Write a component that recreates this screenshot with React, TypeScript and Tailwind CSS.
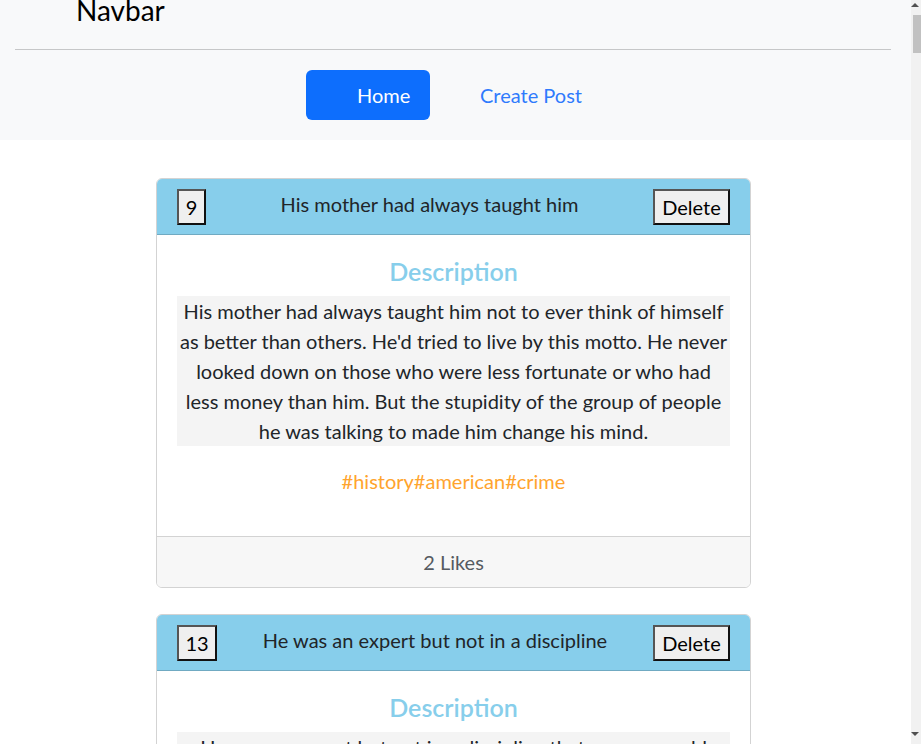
type Post = {
  id: number;
  title: string;
  lines: string[];
  tags: string[];
  likes: number;
};

const posts: Post[] = [
  {
    id: 9,
    title: "His mother had always taught him",
    lines: [
      "His mother had always taught him not to ever think of himself",
      "as better than others. He'd tried to live by this motto. He never",
      "looked down on those who were less fortunate or who had",
      "less money than him. But the stupidity of the group of people",
      "he was talking to made him change his mind.",
    ],
    tags: ["history", "american", "crime"],
    likes: 2,
  },
  {
    id: 13,
    title: "He was an expert but not in a discipline",
    lines: [
      "He was an expert but not in a discipline that anyone could",
      "fully appreciate. He knew how to hold the cone just right so",
      "that the soft serve ice cream fell into it at the precise angle",
      "to form a perfect cone each and every time.",
    ],
    tags: ["fiction", "english"],
    likes: 1,
  },
];

function OldButton({ children, width }: { children: React.ReactNode; width: string }) {
  return (
    <button
      className={`${width} h-[36px] shrink-0 flex items-center justify-center bg-[#efefef] text-[20px] text-black border-2 border-t-[#555] border-l-[#555] border-b-[#111] border-r-[#111]`}
    >
      {children}
    </button>
  );
}

function PostCard({ post }: { post: Post }) {
  return (
    <div className="w-[595px] bg-white border border-[#d3d3d3] rounded-md overflow-hidden">
      <div className="h-[56px] bg-[#87ceeb] border-b border-[#70aac2] flex items-center px-[20px]">
        <OldButton width={post.id > 9 ? "w-[40px]" : "w-[29px]"}>{post.id}</OldButton>
        <div className="flex-1 text-center text-[20px] leading-[30px] text-[#212529] -mt-[5px]">{post.title}</div>
        <OldButton width="w-[77px]">Delete</OldButton>
      </div>
      <div className="px-[20px] pt-[22px] pb-[40px]">
        <h4 className="text-center text-[25px] leading-[29px] font-semibold text-[#87ceeb] mb-[10px]">Description</h4>
        <p className="bg-[#f4f4f4] text-center text-[20px] leading-[30px] text-[#212529]">
          {post.lines.map((l, i) => (
            <span key={i}>
              {l}
              {i < post.lines.length - 1 && <br />}
            </span>
          ))}
        </p>
        <p className="mt-[20px] text-center text-[20px] leading-[30px] text-[#ffa42e]">
          {post.tags.map((t) => `#${t}`).join("")}
        </p>
      </div>
      <div className="h-[51px] bg-[#f7f7f7] border-t border-[#d3d3d3] flex items-center justify-center text-[20px] text-[#565b61]">
        {post.likes} Likes
      </div>
    </div>
  );
}

export default function App() {
  return (
    <div className="h-[744px] overflow-hidden flex font-['Lato',sans-serif] bg-white">
      <div className="flex-1 flex flex-col">
        <nav className="h-[140px] shrink-0 bg-[#f8f9fa] flex flex-col">
          <div className="h-[49px] overflow-hidden pl-[76px]">
            <div className="-mt-[4px] text-[28px] leading-none text-black">Navbar</div>
          </div>
          <div className="ml-[15px] mr-[20px] border-t border-[#c6c7c8]" />
          <div className="flex items-center pl-[306px] mt-[20px]">
            <a className="h-[50px] w-[124px] rounded-md bg-[#0d6efd] text-white text-[20px] flex items-center pl-[51px]">
              Home
            </a>
            <a className="ml-[50px] text-[20px] text-[#2f7bfd]">Create Post</a>
          </div>
        </nav>
        <main className="flex flex-col gap-[26px] pl-[156px] pt-[38px]">
          {posts.map((p) => (
            <PostCard key={p.id} post={p} />
          ))}
        </main>
      </div>
      <div className="w-[10px] shrink-0 bg-[#f1f1f1] flex flex-col items-end">
        <div className="h-[15px] w-full flex justify-end pt-[3px] pr-[2px]">
          <div className="w-0 h-0 border-l-[4px] border-r-[4px] border-b-[4px] border-l-transparent border-r-transparent border-b-[#505050]" />
        </div>
        <div className="h-[38px] w-[8px] bg-[#c1c1c1]" />
        <div className="flex-1" />
        <div className="h-[12px] w-full flex justify-end pr-[2px]">
          <div className="w-0 h-0 border-l-[4px] border-r-[4px] border-t-[4px] border-l-transparent border-r-transparent border-t-[#505050]" />
        </div>
      </div>
    </div>
  );
}
